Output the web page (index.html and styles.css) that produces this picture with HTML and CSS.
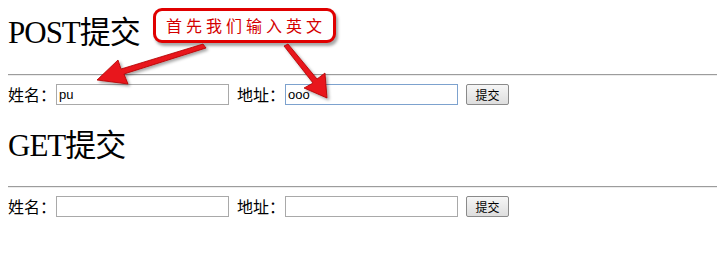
FILE: index.html
```html
<!DOCTYPE html>
<html lang="zh-CN">
<head>
    <meta charset="UTF-8">
    <title>POST / GET 提交</title>
    <link rel="stylesheet" href="styles.css">
</head>
<body>

    <!-- POST form -->
    <div class="section">
        <h1>POST提交</h1>
        <hr>
        <form class="form-row" method="post">
            <label>姓名：</label>
            <input class="text-input" type="text" name="name" value="pu">
            <label class="gap">地址：</label>
            <input class="text-input focused" type="text" name="addr" value="ooo">
            <button class="submit-btn" type="button">提交</button>
        </form>
    </div>

    <!-- GET form -->
    <div class="section second">
        <h1>GET提交</h1>
        <hr>
        <form class="form-row" method="get">
            <label>姓名：</label>
            <input class="text-input" type="text" name="name">
            <label class="gap">地址：</label>
            <input class="text-input" type="text" name="addr">
            <button class="submit-btn" type="button">提交</button>
        </form>
    </div>

    <!-- Annotation callout over the page -->
    <div class="callout">首先我们输入英文</div>
    <svg class="arrows" width="717" height="262" viewBox="0 0 717 262">
        <defs>
            <filter id="shadow" x="-20%" y="-20%" width="140%" height="140%">
                <feDropShadow dx="2" dy="2" stdDeviation="1.5" flood-color="#000" flood-opacity="0.35"/>
            </filter>
        </defs>
        <g filter="url(#shadow)" fill="#e8141a" stroke="#b00000" stroke-width="0.8" stroke-linejoin="round">
            <!-- left arrow -->
            <path d="M203 44 L206 48 L124 74 L128 84 L97 80 L118 60 L121 69 Z"/>
            <!-- right arrow -->
            <path d="M284 46 L288 44 L317 79 L325 73 L327 98 L304 88 L313 83 Z"/>
        </g>
    </svg>

</body>
</html>
```

FILE: styles.css
```css
* {
    box-sizing: border-box;
}
body {
    margin: 0;
    padding: 14px 0 0 8px;
    font-family: "Liberation Serif", "Noto Sans CJK SC", serif;
    color: #000;
    background: #fff;
    position: relative;
    width: 717px;
    height: 262px;
    overflow: hidden;
}
h1 {
    margin: 0 0 23px;
    font-size: 31px;
    font-weight: normal;
    line-height: 37px;
    letter-spacing: -1px;
}
.second h1 {
    margin-top: 22px;
    margin-bottom: 22px;
}
hr {
    margin: 0;
    height: 0;
    border: none;
    border-top: 1px solid #9c9c9c;
    border-bottom: 1px solid #ececec;
}
.form-row {
    display: flex;
    align-items: center;
    margin: 8px 0 0;
    height: 21px;
}
.form-row label {
    font-family: "Noto Sans CJK SC", sans-serif;
    font-size: 16px;
    line-height: 21px;
    width: 48px;
}
.form-row .gap {
    margin-left: 8px;
}
.text-input {
    width: 173px;
    height: 21px;
    margin: 0;
    padding: 0 2px;
    border: 1px solid #a9a9a9;
    font-family: "Liberation Sans", Arial, sans-serif;
    font-size: 13px;
    color: #000;
    outline: none;
}
.text-input.focused {
    border-color: #7da2ce;
}
.submit-btn {
    margin-left: 8px;
    width: 43px;
    height: 21px;
    padding: 0;
    border: 1px solid #8a8a8a;
    border-radius: 2px;
    background: linear-gradient(#f6f6f6, #dedede);
    font-family: "Noto Sans CJK SC", sans-serif;
    font-size: 12px;
    color: #000;
}
.callout {
    position: absolute;
    left: 153px;
    top: 8px;
    width: 183px;
    height: 35px;
    border: 3px solid #e00000;
    border-radius: 9px;
    background: #fff;
    box-shadow: 2px 3px 3px rgba(0, 0, 0, 0.35);
    color: #d40000;
    font-family: "Noto Sans CJK SC", sans-serif;
    font-size: 16px;
    line-height: 29px;
    letter-spacing: 4px;
    text-align: center;
    padding-left: 3px;
}
.arrows {
    position: absolute;
    left: 0;
    top: 0;
    pointer-events: none;
}
```
